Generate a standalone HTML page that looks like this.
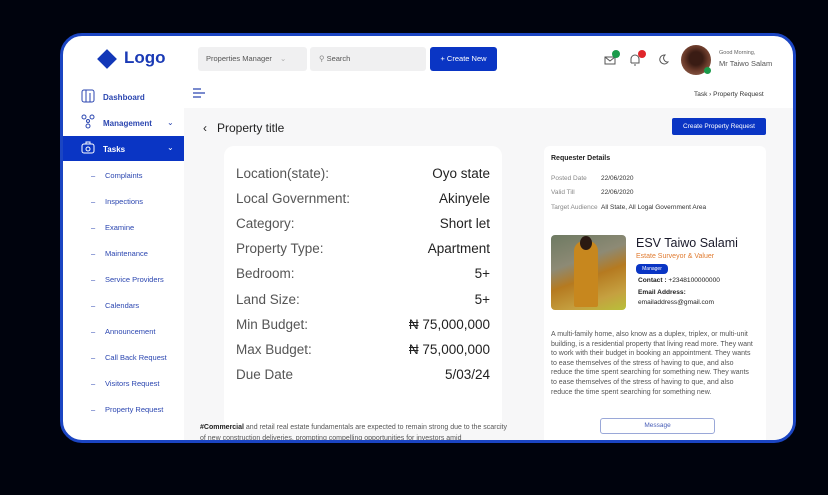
<!DOCTYPE html>
<html><head><meta charset="utf-8"><style>
*{box-sizing:border-box;margin:0;padding:0}
body{width:828px;height:495px;background:#00030d;font-family:"Liberation Sans",sans-serif;position:relative;overflow:hidden}
.frame{position:absolute;left:60px;top:33px;width:736px;height:410px;border:3px solid #1b45c2;border-radius:22px;background:#fff;overflow:hidden}
.a{position:absolute}
.side a{position:absolute;left:0;width:122px;font-size:8px;color:#2b46b0;text-decoration:none}
.sub{left:42px!important;font-size:7.5px!important}
.sub:before{content:"–";position:absolute;left:-14px}
.content{left:121px;top:72px;right:0;bottom:0;background:#f7f7f8}
.card{background:#fff;border-radius:10px}
.row{position:absolute;left:12px;right:12px;font-size:13.5px;color:#555;display:flex;justify-content:space-between}
.row b{font-weight:normal;color:#222}
.rd{font-size:6.5px;color:#888;position:absolute;left:7px}
.rd span{position:absolute;left:50px;color:#333;white-space:nowrap}
</style></head><body>
<div class="frame">
 <div class="a" style="left:37px;top:16px;width:14px;height:14px;background:#1237b8;transform:rotate(45deg)"></div>
 <div class="a" style="left:61px;top:12px;font-size:17px;font-weight:bold;color:#1a3ab5">Logo</div>
 <div class="a" style="left:135px;top:11px;width:109px;height:24px;background:#f0f0f1;border-radius:3px;font-size:7.5px;color:#555;padding:7px 8px">Properties Manager <span style="margin-left:6px;color:#aaa">⌄</span></div>
 <div class="a" style="left:247px;top:11px;width:116px;height:24px;background:#f0f0f1;border-radius:3px;font-size:7.5px;color:#555;padding:7px 9px"><span style="color:#888">⚲</span> Search</div>
 <div class="a" style="left:367px;top:11px;width:67px;height:24px;background:#0a35c4;border-radius:3px;font-size:7.5px;color:#fff;text-align:center;line-height:24px">+ Create New</div>
 <svg class="a" style="left:541px;top:18px" width="14" height="12" viewBox="0 0 14 12"><rect x="1" y="3" width="10" height="7" fill="none" stroke="#555" stroke-width="1"/><path d="M1 3l5 4 5-4" fill="none" stroke="#555"/></svg>
 <div class="a" style="left:549px;top:14px;width:8px;height:8px;border-radius:50%;background:#1a9a4a"></div>
 <svg class="a" style="left:566px;top:17px" width="12" height="13" viewBox="0 0 12 13"><path d="M2 10V6a4 4 0 018 0v4H2M5 12h2" fill="none" stroke="#555"/></svg>
 <div class="a" style="left:575px;top:14px;width:8px;height:8px;border-radius:50%;background:#e0262b"></div>
 <svg class="a" style="left:595px;top:18px" width="11" height="11" viewBox="0 0 11 11"><path d="M7 1a4.5 4.5 0 103 7A4 4 0 017 1z" fill="none" stroke="#555"/></svg>
 <div class="a" style="left:618px;top:9px;width:30px;height:30px;border-radius:50%;background:radial-gradient(circle at 50% 45%,#3a1c14 30%,#6a3a2a 55%,#a0705a)"></div>
 <div class="a" style="left:641px;top:31px;width:7px;height:7px;border-radius:50%;background:#1a9a4a"></div>
 <div class="a" style="left:656px;top:14px;font-size:5.5px;color:#666">Good Morning,</div>
 <div class="a" style="left:656px;top:23px;font-size:7.5px;color:#555">Mr Taiwo Salam</div>
 <svg class="a" style="left:130px;top:52px" width="13" height="10" viewBox="0 0 13 10"><path d="M0 1h8M0 5h12M0 9h8" stroke="#2b46b0" stroke-width="1.2"/></svg>
 <div class="a" style="left:631px;top:55px;font-size:6.5px;color:#333">Task › Property Request</div>
 <div class="side">
  <svg class="a" style="left:18px;top:53px" width="14" height="14" viewBox="0 0 14 14"><rect x="1" y="1" width="12" height="12" rx="2" fill="none" stroke="#2b46b0"/><path d="M5 1v12M9 4v9" stroke="#2b46b0"/></svg>
  <a style="top:57px;left:40px;font-weight:bold">Dashboard</a>
  <svg class="a" style="left:18px;top:78px" width="14" height="15" viewBox="0 0 14 15"><circle cx="3" cy="3" r="2" fill="none" stroke="#2b46b0"/><circle cx="11" cy="3" r="2" fill="none" stroke="#2b46b0"/><circle cx="7" cy="12" r="2" fill="none" stroke="#2b46b0"/><circle cx="7" cy="7" r="1.5" fill="none" stroke="#2b46b0"/></svg>
  <a style="top:83px;left:40px;font-weight:bold">Management</a>
  <div class="a" style="left:104px;top:82px;font-size:8px;color:#2b46b0">⌄</div>
  <div class="a" style="left:0;top:100px;width:121px;height:25px;background:#0a35c4"></div>
  <svg class="a" style="left:18px;top:105px" width="14" height="13" viewBox="0 0 14 13"><rect x="1" y="3" width="12" height="9" rx="2" fill="none" stroke="#fff"/><path d="M5 3V1h4v2" fill="none" stroke="#fff"/><circle cx="7" cy="8" r="2" fill="none" stroke="#fff"/></svg>
  <a style="top:109px;left:40px;color:#fff;font-weight:bold">Tasks</a>
  <div class="a" style="left:104px;top:107px;font-size:8px;color:#fff">⌄</div>
  <a class="sub" style="top:135px">Complaints</a>
  <a class="sub" style="top:161px">Inspections</a>
  <a class="sub" style="top:187px">Examine</a>
  <a class="sub" style="top:213px">Maintenance</a>
  <a class="sub" style="top:239px">Service Providers</a>
  <a class="sub" style="top:265px">Calendars</a>
  <a class="sub" style="top:291px">Announcement</a>
  <a class="sub" style="top:317px">Call Back Request</a>
  <a class="sub" style="top:343px">Visitors Request</a>
  <a class="sub" style="top:369px">Property Request</a>
 </div>
 <div class="a content">
  <div class="a" style="left:19px;top:13px;font-size:12px;color:#222">‹&nbsp;&nbsp; Property title</div>
  <div class="a" style="left:488px;top:10px;width:94px;height:17px;background:#0a35c4;border-radius:2px;font-size:6.5px;color:#fff;text-align:center;line-height:17px">Create Property Request</div>
  <div class="a card" style="left:40px;top:38px;width:278px;height:283px">
   <div class="row" style="top:20px">Location(state):<b>Oyo state</b></div>
   <div class="row" style="top:45px">Local Government:<b>Akinyele</b></div>
   <div class="row" style="top:70px">Category:<b>Short let</b></div>
   <div class="row" style="top:95px">Property Type:<b>Apartment</b></div>
   <div class="row" style="top:120px">Bedroom:<b>5+</b></div>
   <div class="row" style="top:146px">Land Size:<b>5+</b></div>
   <div class="row" style="top:171px">Min Budget:<b>₦ 75,000,000</b></div>
   <div class="row" style="top:196px">Max Budget:<b>₦ 75,000,000</b></div>
   <div class="row" style="top:221px">Due Date<b>5/03/24</b></div>
  </div>
  <div class="a" style="left:16px;top:314px;width:312px;font-size:7px;color:#555;line-height:11px">
   <b style="color:#222">#Commercial</b> and retail real estate fundamentals are expected to remain strong due to the scarcity of new construction deliveries, prompting compelling opportunities for investors amid
  </div>
  <div class="a card" style="left:360px;top:38px;width:222px;height:300px;border-radius:6px">
   <div class="a" style="left:7px;top:9px;font-size:7px;font-weight:bold;color:#222">Requester Details</div>
   <div class="rd" style="top:29px">Posted Date<span>22/06/2020</span></div>
   <div class="rd" style="top:43px">Valid Till<span>22/06/2020</span></div>
   <div class="rd" style="top:58px">Target Audience<span>All State, All Logal Government Area</span></div>
   <div class="a" style="left:7px;top:89px;width:75px;height:75px;border-radius:4px;background:linear-gradient(160deg,#6e7a62 0%,#8d8a75 35%,#b57a20 55%,#c5a040 80%,#b8c03a)"></div>
   <div class="a" style="left:30px;top:95px;width:24px;height:66px;border-radius:10px 10px 2px 2px;background:#c7871e"></div>
   <div class="a" style="left:36px;top:90px;width:12px;height:14px;border-radius:50%;background:#2a1a12"></div>
   <div class="a" style="left:92px;top:90px;font-size:12.5px;color:#1a1a2a">ESV Taiwo Salami</div>
   <div class="a" style="left:92px;top:107px;font-size:7px;color:#e07b30">Estate Surveyor &amp; Valuer</div>
   <div class="a" style="left:92px;top:118px;width:32px;height:10px;border-radius:4px;background:#0a35c4;font-size:5px;color:#fff;text-align:center;line-height:10px">Manager</div>
   <div class="a" style="left:94px;top:131px;font-size:6.6px;color:#222"><b>Contact :</b> +2348100000000</div>
   <div class="a" style="left:94px;top:143px;font-size:6.6px;color:#222;font-weight:bold">Email Address:</div>
   <div class="a" style="left:94px;top:153px;font-size:6.6px;color:#222">emailaddress@gmail.com</div>
   <div class="a" style="left:7px;top:184px;width:205px;font-size:7px;line-height:9.6px;color:#555">A multi-family home, also know as a duplex, triplex, or multi-unit building, is a residential property that living read more. They want to work with their budget in booking an appointment. They wants to ease themselves of the stress of having to que, and also reduce the time spent searching for something new. They wants to ease themselves of the stress of having to que, and also reduce the time spent searching for something new.</div>
   <div class="a" style="left:56px;top:272px;width:115px;height:16px;border:1px solid #9aa8d8;border-radius:3px;font-size:6.5px;color:#4a5fb8;text-align:center;line-height:14px">Message</div>
  </div>
 </div>
</div>
</body></html>
